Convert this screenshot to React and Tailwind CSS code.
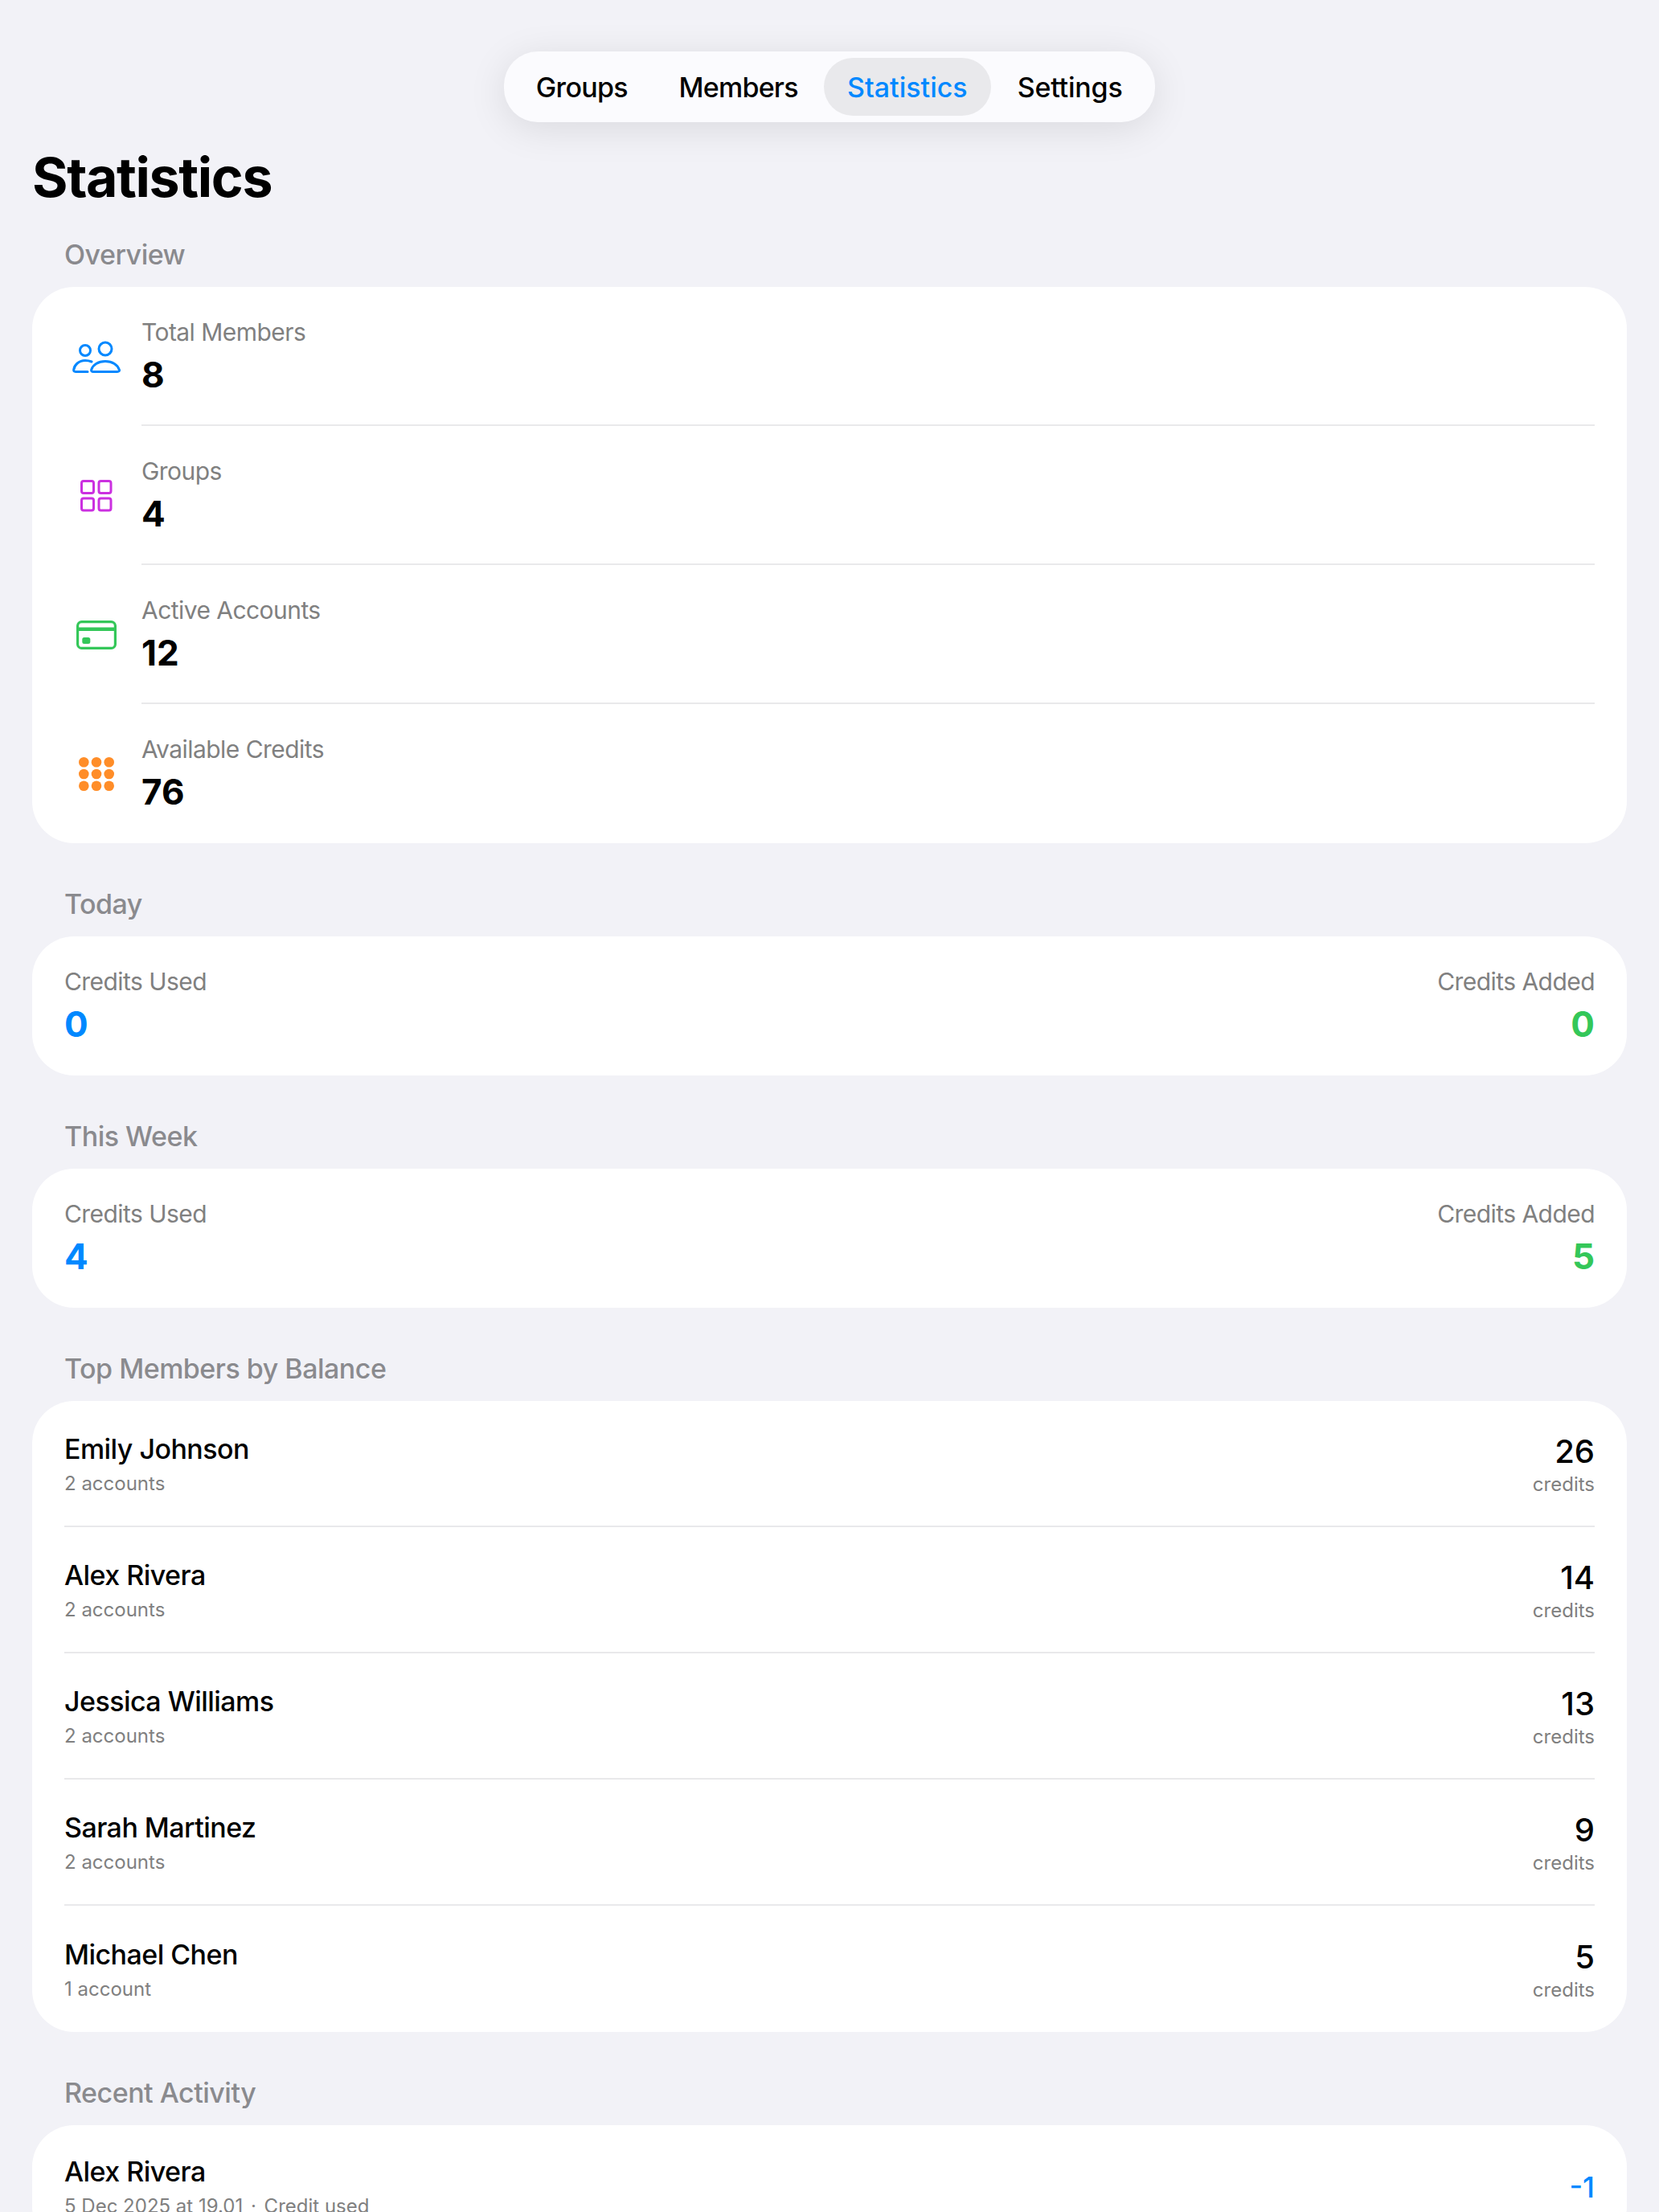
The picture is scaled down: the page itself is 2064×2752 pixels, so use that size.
const FONT = "font-['Inter','Noto_Sans',sans-serif]";

const UsersIcon = () => (
  <svg width="60" height="40" viewBox="0 0 60 40" fill="none" stroke="#0088ff" strokeWidth="3">
    <circle cx="16" cy="12" r="6.500" />
    <circle cx="41" cy="10" r="8" />
    <path d="M24 26c-2.500-1-5-1.500-8-1.500-8 0-13.500 5.500-14.300 11.500-.2 2 .8 2.400 2.300 2.400h15" strokeLinecap="round" />
    <path d="M41 25.600c-9 0-15.500 4.400-17.300 10.400-.5 1.800.8 2.400 2.300 2.400h30c1.800 0 3-.9 2.300-2.400C56.300 30 50 25.600 41 25.600z" />
  </svg>
);

const GridIcon = () => (
  <svg width="40" height="40" viewBox="0 0 40 40" fill="none" stroke="#cb30e0" strokeWidth="3">
    <rect x="1.500" y="1.500" width="15" height="15" rx="2.500" />
    <rect x="23" y="1.500" width="15" height="15" rx="2.500" />
    <rect x="1.500" y="23" width="15" height="15" rx="2.500" />
    <rect x="23" y="23" width="15" height="15" rx="2.500" />
  </svg>
);

const CardIcon = () => (
  <svg width="50" height="36" viewBox="0 0 50 36">
    <rect x="1.600" y="1.600" width="46.800" height="32.800" rx="5" fill="none" stroke="#34c759" strokeWidth="3.200" />
    <rect x="2" y="8.500" width="46" height="4.500" fill="#34c759" />
    <rect x="7.300" y="21" width="10" height="8" rx="2.500" fill="#34c759" />
  </svg>
);

const DotsIcon = () => (
  <svg width="44" height="42" viewBox="0 0 44 42" fill="#ff8d28">
    {[6.300, 21, 35.700].map((y) =>
      [6.300, 22, 37.700].map((x) => <circle key={`${x}-${y}`} cx={x} cy={y} r="6.300" />)
    )}
  </svg>
);

const overview = [
  { label: 'Total Members', value: '8', icon: <UsersIcon /> },
  { label: 'Groups', value: '4', icon: <GridIcon /> },
  { label: 'Active Accounts', value: '12', icon: <CardIcon /> },
  { label: 'Available Credits', value: '76', icon: <DotsIcon /> },
];

const topMembers = [
  { name: 'Emily Johnson', accounts: '2 accounts', credits: 26 },
  { name: 'Alex Rivera', accounts: '2 accounts', credits: 14 },
  { name: 'Jessica Williams', accounts: '2 accounts', credits: 13 },
  { name: 'Sarah Martinez', accounts: '2 accounts', credits: 9 },
  { name: 'Michael Chen', accounts: '1 account', credits: 5 },
];

const SectionTitle = ({ children }) => (
  <h2 className="px-10 pb-[20px] text-[34px] leading-[41px] font-medium tracking-[-0.5px] text-[#8a8a8e]">{children}</h2>
);

const Stat = ({ label, value, valueColor, right }) => (
  <div className={right ? 'text-right' : ''}>
    <div className="text-[30px] leading-[38px] tracking-[-0.55px] text-[#808080]">{label}</div>
    <div className={`mt-[8px] text-[44px] leading-[52px] font-bold ${valueColor}`}>{value}</div>
  </div>
);

const CreditsCard = ({ used, added }) => (
  <div className="flex h-[173px] items-start justify-between rounded-[52px] bg-white px-10 pt-[37px]">
    <Stat label="Credits Used" value={used} valueColor="text-[#0088ff]" />
    <Stat label="Credits Added" value={added} valueColor="text-[#34c759]" right />
  </div>
);

const NavPill = () => (
  <div className="flex justify-center pt-16">
    <nav className="flex h-[88px] w-[810px] items-center rounded-[42px] bg-[#fbfbfe] px-2 text-[34px] font-medium text-black shadow-[0_8px_48px_rgba(0,0,0,0.1)]">
      <div className="flex h-[72px] w-[178px] items-center justify-center tracking-[-0.7px]">Groups</div>
      <div className="flex h-[72px] w-[212px] items-center justify-center tracking-[-0.8px]">Members</div>
      <div className="flex h-[72px] w-[209px] items-center justify-center rounded-[36px] bg-[#e9e9ec] text-[#0088ff]">Statistics</div>
      <div className="flex h-[72px] w-[196px] items-center justify-center tracking-[-0.2px]">Settings</div>
    </nav>
  </div>
);

export default function App() {
  return (
    <div className={`h-screen overflow-hidden bg-[#f2f2f7] ${FONT}`}>
      <NavPill />

      <main className="px-10">
        <h1 className="mt-[27px] pb-[35px] text-[68px] leading-[82px] font-bold tracking-[-1.4px] text-black">Statistics</h1>

        <SectionTitle>Overview</SectionTitle>
        <div className="rounded-[52px] bg-white">
          {overview.map((item, i) => (
            <div key={item.label} className="flex h-[173px]">
              <div className="flex w-[136px] shrink-0 items-center justify-center pl-[24px]">{item.icon}</div>
              <div className={`mr-10 flex-1 pt-[37px] ${i < overview.length - 1 ? 'border-b-2 border-[#e9e9eb]' : ''}`}>
                <Stat label={item.label} value={item.value} valueColor="text-black" />
              </div>
            </div>
          ))}
        </div>

        <div className="mt-[55px]">
          <SectionTitle>Today</SectionTitle>
          <CreditsCard used={0} added={0} />
        </div>

        <div className="mt-[55px]">
          <SectionTitle>This Week</SectionTitle>
          <CreditsCard used={4} added={5} />
        </div>

        <div className="mt-[55px]">
          <SectionTitle>Top Members by Balance</SectionTitle>
          <div className="rounded-[52px] bg-white px-10">
            {topMembers.map((m, i) => (
              <div
                key={m.name}
                className={`flex h-[157px] items-center justify-between pt-[2px] ${i < topMembers.length - 1 ? 'border-b-2 border-[#e9e9eb]' : ''}`}
              >
                <div>
                  <div className="text-[34px] leading-[44px] font-medium tracking-[-0.55px] text-black">{m.name}</div>
                  <div className="mt-[5px] text-[24px] leading-[32px] text-[#808080]">{m.accounts}</div>
                </div>
                <div className="text-right">
                  <div className="mt-[3px] text-[40px] leading-[46px] font-medium text-black">{m.credits}</div>
                  <div className="mt-[2px] text-[24px] leading-[32px] text-[#808080]">credits</div>
                </div>
              </div>
            ))}
          </div>
        </div>

        <div className="mt-[55px]">
          <SectionTitle>Recent Activity</SectionTitle>
          <div className="rounded-[52px] bg-white px-10">
            <div className="flex h-[153px] items-center justify-between">
              <div>
                <div className="text-[34px] leading-[44px] font-medium tracking-[-0.55px] text-black">Alex Rivera</div>
                <div className="mt-[5px] text-[24px] leading-[32px] text-[#808080]">
                  5 Dec 2025 at 19.01 <span className="mx-[3px]">·</span> Credit used
                </div>
              </div>
              <div className="text-[36px] font-medium text-[#0088ff]">-1</div>
            </div>
          </div>
        </div>
      </main>
    </div>
  );
}
